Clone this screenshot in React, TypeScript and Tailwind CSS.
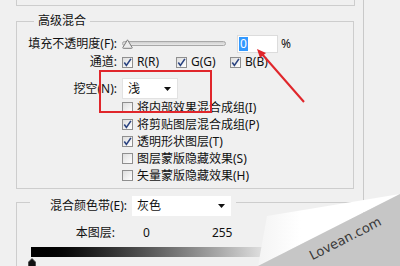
import React from "react";

const Box = ({ checked }: { checked?: boolean }) => (
  <span className="flex h-[11px] w-[11px] shrink-0 items-center justify-center border border-[#8f8f8f] bg-gradient-to-br from-[#dedede] to-white">
    {checked && (
      <svg width="9" height="9" viewBox="0 0 9 9">
        <path d="M1.3 4.6 L3.4 7.4 L7.9 0.9" fill="none" stroke="#2a4380" strokeWidth="1.6" />
      </svg>
    )}
  </span>
);

const Arrow = () => (
  <svg width="7" height="4" viewBox="0 0 7 4">
    <polygon points="0,0 7,0 3.5,4" fill="#111" />
  </svg>
);

const CheckRow = ({ checked, label }: { checked?: boolean; label: string }) => (
  <div className="flex h-[17px] items-center">
    <Box checked={checked} />
    <span className="ml-[4px] leading-[14px]">{label}</span>
  </div>
);

export default function App() {
  return (
    <div className="relative h-[266px] w-[400px] overflow-hidden bg-[#f0f0f0] font-['Noto_Sans','Noto_Sans_CJK_SC',sans-serif] text-[12px] text-[#111]">
      <div className="h-full w-[364px] border-r border-[#c9c9c9]">
        {/* previous group remnant */}
        <div className="ml-[16px] h-[6px] w-[339px] border-x border-b border-[#cdcdcd]" />

        {/* 高级混合 */}
        <div className="ml-[16px] mt-[15px] h-[168px] w-[338px] border border-[#cdcdcd]">
          <div className="-mt-[9px] ml-[17px] w-fit bg-[#f0f0f0] px-[4px] leading-[16px]">高级混合</div>

          <div className="mt-[5px] flex h-[20px] items-center">
            <div className="w-[100px] text-right leading-[14px]">填充不透明度(F):</div>
            <div className="relative ml-[5px] h-[20px] w-[104px]">
              <div className="absolute left-0 right-0 top-[7px] h-[5px] rounded-full border border-[#a8a8a8] bg-gradient-to-b from-[#cfcfcf] to-[#e9e9e9]" />
              <svg className="absolute left-[0px] top-[5px]" width="11" height="10" viewBox="0 0 11 10">
                <path d="M5.5 0.8 L10.2 8.6 Q10.4 9.3 9.6 9.3 L1.4 9.3 Q0.6 9.3 0.8 8.6 Z" fill="#ececec" stroke="#7d7d7d" strokeWidth="1" />
              </svg>
            </div>
            <div className="ml-[11px] flex h-[18px] w-[41px] items-center border border-[#dcdcdc] bg-white pl-[1px]">
              <span className="bg-[#3399ff] px-[1px] leading-[14px] text-white">0</span>
            </div>
            <span className="ml-[3px] leading-[14px]">%</span>
          </div>

          <div className="flex h-[16px] items-center">
            <div className="w-[100px] text-right leading-[14px]">通道:</div>
            <div className="ml-[5px] flex w-[54px] items-center">
              <Box checked />
              <span className="ml-[4px] leading-[14px]">R(R)</span>
            </div>
            <div className="flex w-[54px] items-center">
              <Box checked />
              <span className="ml-[4px] leading-[14px]">G(G)</span>
            </div>
            <div className="flex items-center">
              <Box checked />
              <span className="ml-[4px] leading-[14px]">B(B)</span>
            </div>
          </div>

          <div className="mt-[8px] flex h-[21px] items-center">
            <div className="w-[100px] text-right leading-[14px]">挖空(N):</div>
            <div className="ml-[5px] flex h-[21px] w-[56px] items-center justify-between border border-[#e2e2e2] bg-white pl-[5px] pr-[6px]">
              <span className="leading-[14px]">浅</span>
              <Arrow />
            </div>
          </div>

          <div className="ml-[105px] flex flex-col">
            <CheckRow label="将内部效果混合成组(I)" />
            <CheckRow checked label="将剪贴图层混合成组(P)" />
            <CheckRow checked label="透明形状图层(T)" />
            <CheckRow label="图层蒙版隐藏效果(S)" />
            <CheckRow label="矢量蒙版隐藏效果(H)" />
          </div>
        </div>

        {/* 混合颜色带 */}
        <div className="ml-[16px] mt-[13px] h-[80px] w-[337px] border-x border-t border-[#cdcdcd]">
          <div className="-mt-[7px] ml-[13px] flex h-[20px] w-fit items-center bg-[#f0f0f0] pl-[20px] pr-[5px]">
            <span className="leading-[14px]">混合颜色带(E):</span>
            <div className="ml-[5px] flex h-[20px] w-[99px] items-center justify-between bg-white pl-[5px] pr-[6px]">
              <span className="leading-[14px]">灰色</span>
              <Arrow />
            </div>
          </div>

          <div className="mt-[10px] flex h-[14px] items-center">
            <div className="w-[98px] text-right leading-[14px]">本图层:</div>
            <span className="ml-[28px] leading-[14px]">0</span>
            <span className="ml-[62px] leading-[14px]">255</span>
          </div>

          <div className="ml-[14px] mt-[7px] h-[10px] w-[256px] bg-gradient-to-r from-black to-white" />
          <svg className="ml-[11px] mt-[1px]" width="8" height="9" viewBox="0 0 8 9">
            <path d="M4 0.5 L7.5 4 L7.5 9 L0.5 9 L0.5 4 Z" fill="#111" stroke="#444" strokeWidth="0.8" />
          </svg>
        </div>
      </div>

      {/* annotation overlays */}
      <div className="absolute left-[99px] top-[70px] h-[43px] w-[113px] border-2 border-[#e0262b]" />
      <svg className="absolute left-0 top-0" width="400" height="266" viewBox="0 0 400 266">
        <line x1="304" y1="102" x2="262" y2="54" stroke="#e0262b" strokeWidth="2" />
        <polygon points="257,49 266,53 260,58" fill="#e0262b" />
        <defs>
          <linearGradient id="wg" x1="0" y1="0" x2="1" y2="0">
            <stop offset="0" stopColor="#f4f4f4" />
            <stop offset="0.3" stopColor="#ffffff" />
          </linearGradient>
        </defs>
        <polygon points="267,216 400,194 258,266" fill="url(#wg)" />
        <polygon points="258,266 400,194 400,266" fill="#c6c6c6" />
        <text
          x="345"
          y="243"
          textAnchor="middle"
          fontFamily="DejaVu Sans, sans-serif"
          fontSize="13"
          fill="#383838"
          transform="rotate(-27 345 238)"
        >
          Lovean.com
        </text>
      </svg>
    </div>
  );
}
